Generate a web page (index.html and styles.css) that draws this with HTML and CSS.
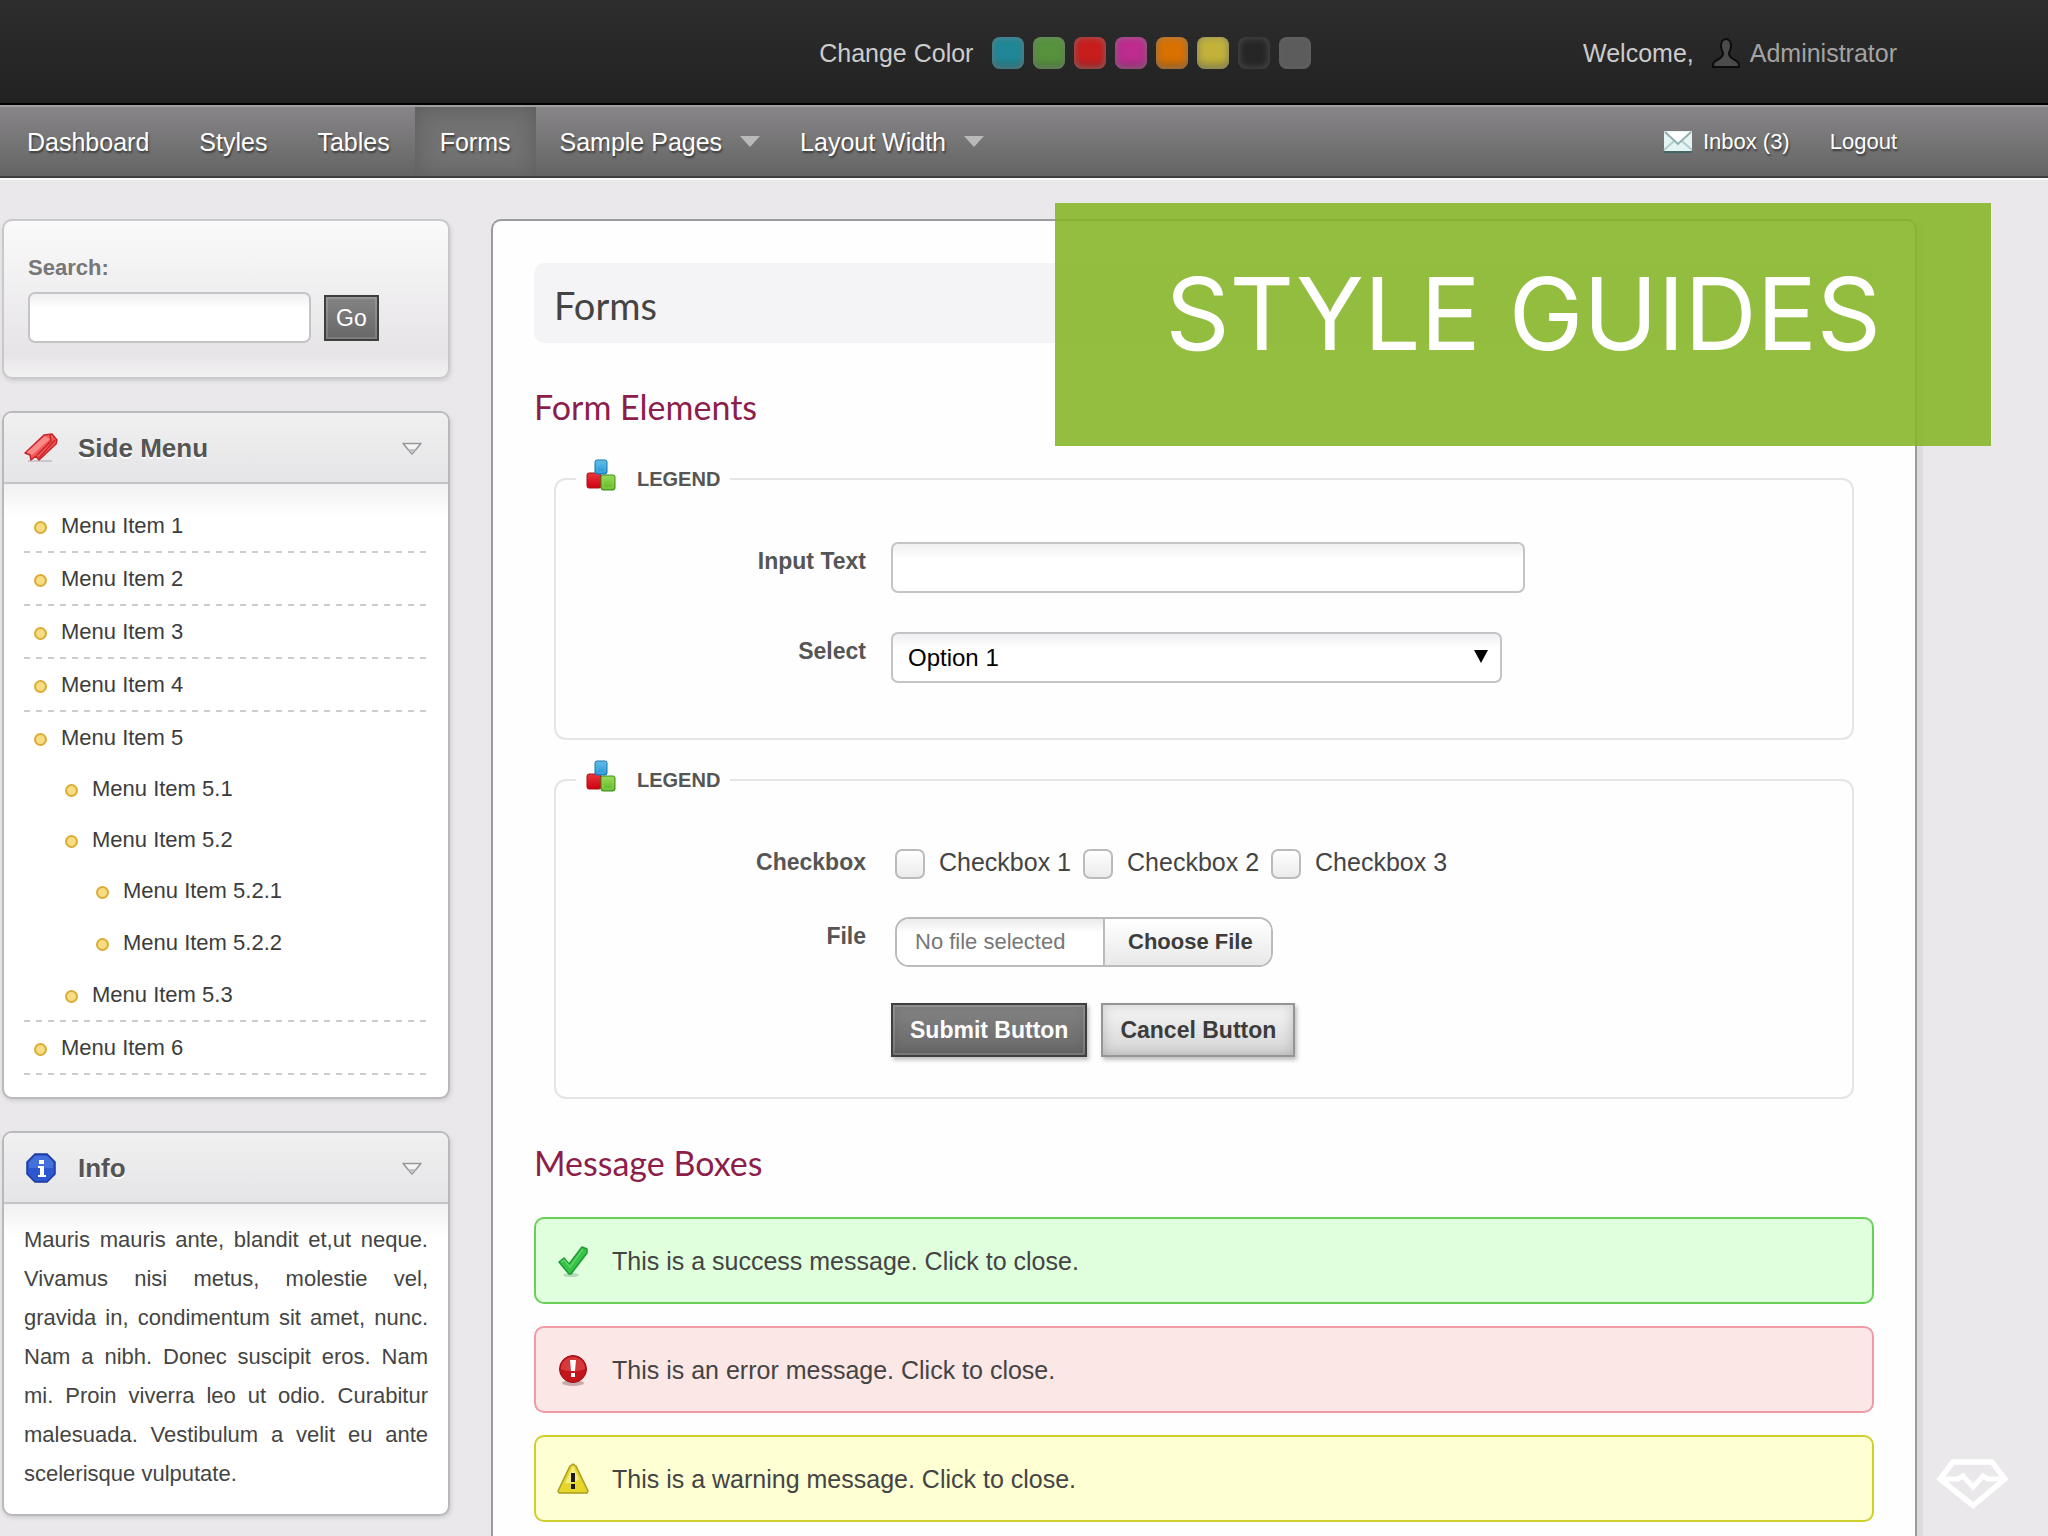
FILE: index.html
```html
<!DOCTYPE html>
<html lang="en">
<head>
<meta charset="UTF-8">
<meta name="viewport" content="width=device-width, initial-scale=1.0">
<title>Forms</title>
<link rel="stylesheet" href="styles.css">
</head>
<body>

<!-- shared icons -->
<svg class="defs" width="0" height="0" aria-hidden="true">
    <defs>
        <linearGradient id="gBlue" x1="0" y1="0" x2="0" y2="1"><stop offset="0" stop-color="#6cc4ea"/><stop offset="1" stop-color="#1b8fd0"/></linearGradient>
        <linearGradient id="gRed" x1="0" y1="0" x2="0" y2="1"><stop offset="0" stop-color="#e8363c"/><stop offset="1" stop-color="#d00010"/></linearGradient>
        <linearGradient id="gGreen" x1="0" y1="0" x2="0" y2="1"><stop offset="0" stop-color="#9ade58"/><stop offset="1" stop-color="#5db327"/></linearGradient>
    </defs>
    <symbol id="blocks" viewBox="0 0 30 42">
        <rect x="1" y="15" width="14" height="15" rx="2" fill="url(#gRed)" stroke="#a8101a"/>
        <rect x="15" y="17" width="14" height="15" rx="2" fill="url(#gGreen)" stroke="#3f8a1c"/>
        <rect x="17" y="19" width="10" height="11" rx="1" fill="none" stroke="#8fd455"/>
        <rect x="9" y="2" width="12" height="14" rx="2" fill="url(#gBlue)" stroke="#1676ae"/>
        <rect x="11" y="4" width="8" height="10" rx="1" fill="none" stroke="#4fb2e4"/>
    </symbol>
    <symbol id="toggle" viewBox="0 0 22 14">
        <path d="M2 2.5h18L11 13z" fill="#f4f4f4" stroke="#98989a" stroke-width="1.6" stroke-linejoin="round"/>
        <path d="M7 8h8l-4 4.500z" fill="#c4c4c6"/>
    </symbol>
</svg>

<header class="top">
    <div class="switcher">
        <span class="switcher-label">Change Color</span>
        <button type="button" class="swatch teal" aria-label="Teal"></button>
        <button type="button" class="swatch green" aria-label="Green"></button>
        <button type="button" class="swatch red" aria-label="Red"></button>
        <button type="button" class="swatch magenta" aria-label="Magenta"></button>
        <button type="button" class="swatch orange" aria-label="Orange"></button>
        <button type="button" class="swatch yellow" aria-label="Yellow"></button>
        <button type="button" class="swatch black" aria-label="Black"></button>
        <button type="button" class="swatch gray" aria-label="Gray"></button>
    </div>
    <div class="user">
        <span>Welcome,</span>
        <svg width="28" height="32" viewBox="0 0 28 32" aria-hidden="true">
            <path d="M14 2c3 0 5 3 5 7 0 3-1 5-2 7 0 3 1 4 4 6 4 2 6 3 6 7v1H1v-1c0-4 2-5 6-7 3-2 4-3 4-6-1-2-2-4-2-7 0-4 2-7 5-7z" fill="#4b4b4b" stroke="#0c0c0c" stroke-width="2"/>
        </svg>
        <a href="#">Administrator</a>
    </div>
</header>

<nav class="nav">
    <ul class="nav-main">
        <li><a href="#">Dashboard</a></li>
        <li><a href="#">Styles</a></li>
        <li><a href="#">Tables</a></li>
        <li><a href="#" class="active">Forms</a></li>
        <li><a href="#" class="drop">Sample Pages</a></li>
        <li><a href="#" class="drop">Layout Width</a></li>
    </ul>
    <div class="nav-user">
        <a href="#">
            <svg width="30" height="24" viewBox="0 0 30 24" aria-hidden="true">
                <rect x="1" y="2" width="28" height="21" rx="1" fill="#466"/>
                <rect x="1" y="1" width="28" height="20" rx="1" fill="#e4f4f2"/>
                <path d="M1 20l10-9M29 20l-10-9" stroke="#b4cccb" stroke-width="2" fill="none"/>
                <path d="M2 2l13 12L28 2" stroke="#93aeb0" stroke-width="2" fill="#fff"/>
            </svg>
            Inbox (3)</a>
        <a href="#">Logout</a>
    </div>
</nav>

<div class="page">
    <aside class="sidebar">
        <form class="panel search">
            <label for="q">Search:</label>
            <div class="search-row">
                <input type="text" id="q">
                <button type="button" class="btn dark">Go</button>
            </div>
        </form>

        <section class="panel">
            <h2 class="panel-head">
                <svg width="34" height="32" viewBox="0 0 34 32" aria-hidden="true">
                    <path d="M4 29h24" stroke="#c9c9cb" stroke-width="2"/>
                    <path d="M1 21L20 3l8-1 5 6-1 4-17 16-3-4-5 4-1-5z" fill="#f25a58" stroke="#c8262c" stroke-width="1.500" stroke-linejoin="round"/>
                    <path d="M3 20L21 4l5 3L8 23z" fill="#fb8b87"/>
                    <path d="M26 3l1 6-14 14M31 8L15 26" stroke="#c8262c" stroke-width="1.500" fill="none"/>
                </svg>
                <span>Side Menu</span>
                <svg class="toggle" width="22" height="14" aria-hidden="true"><use href="#toggle"/></svg>
            </h2>
            <ul class="menu">
                <li><a href="#">Menu Item 1</a></li>
                <li><a href="#">Menu Item 2</a></li>
                <li><a href="#">Menu Item 3</a></li>
                <li><a href="#">Menu Item 4</a></li>
                <li><a href="#">Menu Item 5</a>
                    <ul>
                        <li><a href="#">Menu Item 5.1</a></li>
                        <li><a href="#">Menu Item 5.2</a>
                            <ul>
                                <li><a href="#">Menu Item 5.2.1</a></li>
                                <li><a href="#">Menu Item 5.2.2</a></li>
                            </ul>
                        </li>
                        <li><a href="#">Menu Item 5.3</a></li>
                    </ul>
                </li>
                <li><a href="#">Menu Item 6</a></li>
            </ul>
        </section>

        <section class="panel">
            <h2 class="panel-head">
                <svg width="34" height="32" viewBox="0 0 34 32" aria-hidden="true">
                    <path d="M11 2h12l8 8v12l-8 8H11l-8-8V10z" fill="#2b57cf" stroke="#1c3a9e" stroke-width="1.500"/>
                    <path d="M11 4h12l6 6v6H5v-6z" fill="#4470dc"/>
                    <path d="M15 8h5v4h-5zM14 14h6v9h2v2h-8v-2h2v-7h-2z" fill="#fff"/>
                </svg>
                <span>Info</span>
                <svg class="toggle" width="22" height="14" aria-hidden="true"><use href="#toggle"/></svg>
            </h2>
            <p class="panel-text">Mauris mauris ante, blandit et,ut neque. Vivamus nisi metus, molestie vel, gravida&nbsp;in, condimentum sit amet, nunc. Nam a nibh. Donec suscipit eros. Nam mi. Proin viverra leo ut odio. Curabitur malesuada. Vestibulum a velit eu ante scelerisque vulputate.</p>
        </section>
    </aside>

    <main class="content">
        <h1>Forms</h1>

        <h2>Form Elements</h2>
        <form>
            <fieldset class="roomy">
                <legend><svg width="30" height="42" aria-hidden="true"><use href="#blocks"/></svg>LEGEND</legend>
                <div class="row">
                    <label for="text">Input Text</label>
                    <input type="text" id="text">
                </div>
                <div class="row">
                    <label for="select">Select</label>
                    <div class="select">
                        <select id="select">
                            <option>Option 1</option>
                        </select>
                        <svg width="14" height="13" viewBox="0 0 14 13" aria-hidden="true"><path d="M0 0h14L7 13z"/></svg>
                    </div>
                </div>
            </fieldset>

            <fieldset>
                <legend><svg width="30" height="42" aria-hidden="true"><use href="#blocks"/></svg>LEGEND</legend>
                <div class="row">
                    <span class="row-label">Checkbox</span>
                    <div class="checks">
                        <label><input type="checkbox">Checkbox 1</label>
                        <label><input type="checkbox">Checkbox 2</label>
                        <label><input type="checkbox">Checkbox 3</label>
                    </div>
                </div>
                <div class="row">
                    <label for="file">File</label>
                    <div class="file">
                        <span class="file-name">No file selected</span>
                        <span class="file-button">Choose File</span>
                        <input type="file" id="file">
                    </div>
                </div>
                <div class="row">
                    <div class="buttons">
                        <button type="button" class="btn dark">Submit Button</button>
                        <button type="button" class="btn light">Cancel Button</button>
                    </div>
                </div>
            </fieldset>
        </form>

        <h2>Message Boxes</h2>
        <div class="messages">
            <p class="message success">
                <svg width="34" height="34" viewBox="0 0 34 34" aria-hidden="true">
                    <ellipse cx="15" cy="31" rx="8" ry="2" fill="#b9d8b7"/>
                    <path d="M3 18l5-4 5 6L26 3l5 2v4L15 30h-2z" fill="#35c445" stroke="#1f9a35" stroke-width="1.500" stroke-linejoin="round"/>
                    <path d="M5 18l3-2 6 7L27 5" fill="none" stroke="#5fd468" stroke-width="1.500"/>
                </svg>
                This is a success message. Click to close.
            </p>
            <p class="message error">
                <svg width="34" height="34" viewBox="0 0 34 34" aria-hidden="true">
                    <ellipse cx="17" cy="30" rx="11" ry="3" fill="#c9a9a8"/>
                    <circle cx="17" cy="16" r="13.500" fill="#c4141c" stroke="#941016"/>
                    <path d="M5 16a12 12 0 0 1 24 0c-7 3-17 3-24 0z" fill="#d43a3c"/>
                    <path d="M14 7h6l-1 11h-4zM15 20h4v4h-4z" fill="#fff"/>
                </svg>
                This is an error message. Click to close.
            </p>
            <p class="message warning">
                <svg width="34" height="34" viewBox="0 0 34 34" aria-hidden="true">
                    <path d="M17 2l3 2 12 25-1 2H3l-1-2L14 4z" fill="#e6d62c" stroke="#a99a20" stroke-width="1.500" stroke-linejoin="round"/>
                    <path d="M17 4l6 13c-4 4-9 5-14 4z" fill="#f3ea84"/>
                    <path d="M15 11h4v9h-4zM15 22h4v5h-4z" fill="#1a1a1a"/>
                </svg>
                This is a warning message. Click to close.
            </p>
        </div>
    </main>
</div>

<div class="banner">STYLE GUIDES</div>

<svg class="mark" width="71" height="50" viewBox="0 0 71 50" aria-hidden="true">
    <path d="M16 3h39l13 17-32 26.500L3 20z" fill="none" stroke="#fff" stroke-width="5.500"/>
    <path d="M4 20h17l5-3 10 11 10-11 5 3h17" fill="none" stroke="#fff" stroke-width="5"/>
</svg>

</body>
</html>
```
FILE: styles.css
```css
* {
    box-sizing: border-box;
}

body {
    margin: 0;
    min-height: 100vh;
    display: flex;
    flex-direction: column;
    position: relative;
    background: #eae8ea;
    color: #444;
    font-family: "Liberation Sans", Arial, sans-serif;
    font-size: 25px;
    line-height: 30px;
}

h1, h2, p, ul, fieldset {
    margin: 0;
    padding: 0;
}

ul {
    list-style: none;
}

a {
    color: inherit;
    text-decoration: none;
}

input, select, button {
    font: inherit;
    margin: 0;
}

.defs {
    position: absolute;
}

/* top bar */
.top {
    display: flex;
    justify-content: space-between;
    align-items: center;
    height: 105px;
    padding: 2px 151px 0 40%;
    background: linear-gradient(#2d2d2d, #232223);
    border-bottom: 2px solid #000;
    color: #ccc;
}

.switcher {
    display: flex;
    align-items: center;
    gap: 9px;
}

.switcher-label {
    margin-right: 10px;
}

.swatch {
    width: 32px;
    height: 32px;
    padding: 0;
    border: 0;
    border-radius: 8px;
    box-shadow: inset 0 0 6px 1px rgba(130, 130, 130, 0.6), inset 0 -6px 6px rgba(60, 60, 60, 0.3);
}

.teal { background: #1f8797; }
.green { background: #56933c; }
.red { background: #c81d1d; }
.magenta { background: #bd2c8e; }
.orange { background: #d97100; }
.yellow { background: #c2b23a; }
.black { background: #262626; }
.gray { background: #5c5c5c; }

.black,
.gray {
    box-shadow: inset 0 0 6px 2px rgba(100, 100, 100, 0.5);
}

.user {
    display: flex;
    align-items: center;
}

.user svg {
    margin: 0 10px 0 18px;
}

.user a {
    color: #a3a3a3;
}

/* navigation */
.nav {
    display: flex;
    justify-content: space-between;
    height: 73px;
    padding: 0 151px 0 2px;
    background: linear-gradient(#878587, #656465);
    border-top: 2px solid #a09fa0;
    border-bottom: 2px solid #3e3d3e;
    box-shadow: 0 2px 0 #fafafa;
    color: #fff;
    text-shadow: 1px 2px 2px rgba(0, 0, 0, 0.5);
}

.nav-main {
    display: flex;
}

.nav-main a {
    display: flex;
    align-items: center;
    height: 100%;
    padding: 0 25px;
}

.nav-main .active {
    background: #737273;
    box-shadow: inset 0 0 24px rgba(0, 0, 0, 0.2);
}

.nav-main .drop {
    padding: 0 16px 0 24px;
}

.drop::after {
    content: "";
    margin-left: 18px;
    border: 10px solid transparent;
    border-top: 11px solid #b9b9b9;
    border-bottom: 0;
}

.nav-user {
    display: flex;
    align-items: center;
    gap: 40px;
    font-size: 22px;
}

.nav-user a {
    display: flex;
    align-items: center;
    gap: 10px;
}

.page {
    flex: 1;
    display: flex;
    gap: 41px;
    padding: 41px 131px 0 2px;
}

/* sidebar */
.sidebar {
    flex: 0 0 448px;
    display: flex;
    flex-direction: column;
    gap: 32px;
    font-size: 22px;
}

.panel {
    background: #fff linear-gradient(#f1f0f2, #fff) 0 70px / 100% 34px no-repeat;
    border: 2px solid #b9b8ba;
    border-radius: 10px;
    box-shadow: 1px 2px 4px rgba(0, 0, 0, 0.12);
}

.search {
    padding: 32px 24px 34px;
    background: linear-gradient(#fbfafb, #e6e4e6 85%, #f3f2f3);
    border-color: #c9c8ca;
    color: #777;
    font-weight: bold;
}

.search label {
    display: block;
    margin-bottom: 9px;
}

.search-row {
    display: flex;
    align-items: center;
    gap: 13px;
}

.search-row input {
    width: 283px;
}

.panel-head {
    display: flex;
    align-items: center;
    gap: 20px;
    height: 71px;
    padding: 0 25px 0 20px;
    background: linear-gradient(#f1f0f1, #e5e4e6);
    border-bottom: 2px solid #c4c3c5;
    border-radius: 8px 8px 0 0;
    color: #555;
    font-size: 26px;
    text-shadow: 0 2px 0 #fff;
}

.panel-head .toggle {
    margin-left: auto;
}

.menu {
    padding: 16px 20px 22px;
    color: #3c3c3c;
}

/* dashed separator under each first level item */
.menu > li {
    padding-bottom: 2px;
    background: repeating-linear-gradient(90deg, #ccc 0 6px, transparent 6px 12px) 0 100% / 100% 2px no-repeat;
}

.menu a {
    display: flex;
    align-items: center;
    gap: 14px;
    height: 51px;
    padding-left: 10px;
}

.menu a::before {
    content: "";
    box-sizing: border-box;
    width: 13px;
    height: 13px;
    margin-top: 3px;
    border: 2px solid #d9ac35;
    border-radius: 50%;
    background: #f7dc83;
}

.menu ul {
    padding-left: 31px;
}

.menu ul ul a {
    height: 52px;
}

.panel-text {
    padding: 16px 20px 21px;
    line-height: 39px;
    text-align: justify;
}

/* content */
.content {
    flex: 1;
    padding: 42px 41px 15px;
    background: #fefefe;
    border: 2px solid #9b9a9c;
    border-bottom: 0;
    border-radius: 10px 10px 0 0;
    box-shadow: 6px 2px 2px rgba(0, 0, 0, 0.06);
}

.content h1,
.content h2 {
    font-family: Lato, sans-serif;
    font-weight: normal;
}

.content h1 {
    padding: 22px 20px 18px;
    background: #f4f3f5;
    border-radius: 10px;
    color: #444;
    font-size: 38px;
    line-height: 40px;
}

.content h2 {
    padding: 44px 0 31px;
    color: #8d1e4b;
    font-size: 34px;
    line-height: 40px;
}

fieldset {
    min-width: 0;
    margin: 0 20px 19px;
    padding: 42px 0 40px;
    border: 2px solid #e5e4e6;
    border-radius: 12px;
}

fieldset.roomy {
    padding-bottom: 55px;
}

fieldset:last-child {
    margin-bottom: 0;
}

legend {
    display: flex;
    align-items: center;
    gap: 21px;
    margin-left: 20px;
    padding: 0 10px;
    color: #555;
    font-size: 20px;
    font-weight: bold;
}

.row {
    display: grid;
    grid-template-columns: 310px 1fr;
    align-items: start;
    column-gap: 25px;
    margin-bottom: 36px;
}

.roomy .row {
    margin-bottom: 39px;
}

.row:last-child {
    margin-bottom: 0;
}

.row > label,
.row-label {
    padding-top: 4px;
    color: #555;
    font-size: 23px;
    font-weight: bold;
    text-align: right;
}

input[type="text"],
select {
    height: 51px;
    padding: 0 15px;
    background: linear-gradient(#f0eff1, #fff 14px);
    border: 2px solid #c4c3c6;
    border-radius: 7px;
}

.row input[type="text"] {
    width: 66%;
}

.select {
    position: relative;
    width: 611px;
}

select {
    width: 100%;
    appearance: none;
    color: #000;
    font-size: 24px;
}

.select svg {
    position: absolute;
    top: 18px;
    right: 14px;
    pointer-events: none;
}

.checks {
    display: flex;
    gap: 12px;
    padding-left: 4px;
}

.checks label {
    display: flex;
    align-items: center;
    gap: 14px;
    height: 38px;
}

.checks input {
    appearance: none;
    width: 30px;
    height: 30px;
    margin-top: 4px;
    background: linear-gradient(#fff, #ebeaec);
    border: 2px solid #bbb;
    border-radius: 7px;
}

.file {
    position: relative;
    justify-self: start;
    display: flex;
    height: 50px;
    margin-left: 4px;
    border: 2px solid #bbb;
    border-radius: 14px;
    font-size: 22px;
    line-height: 46px;
    overflow: hidden;
}

.file-name {
    width: 206px;
    padding-left: 18px;
    background: linear-gradient(#ebeaec, #fff 14px);
    color: #777;
}

.file-button {
    padding: 0 18px 0 23px;
    background: linear-gradient(#fff, #e8e8e8);
    border-left: 2px solid #bbb;
    color: #3c3c3c;
    font-weight: bold;
}

.file input {
    position: absolute;
    inset: 0;
    width: 100%;
    opacity: 0;
}

.buttons {
    grid-column: 2;
    display: flex;
    gap: 14px;
}

.btn {
    height: 54px;
    padding: 0 17px;
    border: 2px solid;
    font-size: 23px;
    font-weight: bold;
}

.btn.dark {
    background: linear-gradient(#858485, #686768);
    border-color: #3f3f3f;
    box-shadow: inset 0 0 0 2px rgba(255, 255, 255, 0.15), inset 0 0 12px rgba(0, 0, 0, 0.15), 2px 3px 4px rgba(0, 0, 0, 0.25);
    color: #fff;
}

.btn.light {
    background: linear-gradient(#f6f6f6, #d4d4d4);
    border-color: #959595;
    box-shadow: inset 0 0 12px rgba(0, 0, 0, 0.18), 2px 3px 4px rgba(0, 0, 0, 0.25);
    color: #3c3c3c;
}

.search-row .btn {
    height: 46px;
    padding: 0 10px;
    box-shadow: inset 0 0 0 2px rgba(255, 255, 255, 0.15);
    font-weight: normal;
}

/* messages */
.messages {
    display: flex;
    flex-direction: column;
    gap: 22px;
    margin-top: 3px;
}

.message {
    display: flex;
    align-items: center;
    gap: 22px;
    height: 87px;
    padding: 0 20px;
    border: 2px solid;
    border-radius: 10px;
}

.success {
    background: #e0ffdc;
    border-color: #68cf58;
}

.error {
    background: #fae7e6;
    border-color: #f09aa6;
}

.warning {
    background: #feffd2;
    border-color: #cfcf2c;
}

/* label laid over the page */
.banner {
    position: absolute;
    top: 203px;
    right: 57px;
    padding: 51px 110px 72px;
    background: rgba(132, 181, 38, 0.88);
    color: #fff;
    font-family: Inter, sans-serif;
    font-size: 100px;
    line-height: 120px;
}

.mark {
    position: fixed;
    right: 40px;
    bottom: 27px;
}
```
